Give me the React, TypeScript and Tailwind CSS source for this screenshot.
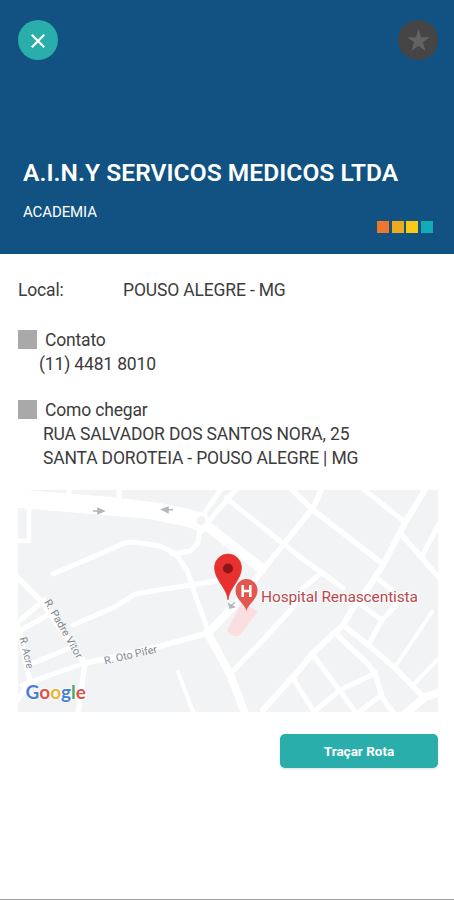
const ROADS: { d: string; w: number }[] = [
  { d: "M69 488V500M119 490V504", w: 5 },
  { d: "M29 508V541H16", w: 4.5 },
  { d: "M53 574L100 554L124 543L133 542L160 546L175 553L187 570L197 600L209 633", w: 5 },
  { d: "M172 554L190 551L198 543L200 526", w: 5 },
  { d: "M73 625L115 607L135 594L165 589L217 581", w: 5 },
  { d: "M203 515L222 488M210 520L237 488", w: 5 },
  { d: "M226 498L300 557L343 588", w: 5 },
  { d: "M262 571L300 524L313 508L322 488", w: 5.5 },
  { d: "M290 488L313 510L383 564", w: 5.5 },
  { d: "M362 488L405 522", w: 5 },
  { d: "M426 488L405 523L383 565L368 588L355 605L343 625L313 653L300 669L263 710", w: 6 },
  { d: "M402 535L440 579M440 522L422 556", w: 5 },
  { d: "M377 578L392 590L402 599L382 620L370 642M360 604L382 620", w: 5 },
  { d: "M343 625L372 648L397 670L423 697", w: 5.5 },
  { d: "M397 664L432 612M415 683L440 657", w: 4 },
  { d: "M440 692L425 697L405 714", w: 8 },
  { d: "M335 633L367 663L375 673L382 697L394 714", w: 5.5 },
  { d: "M374 674L340 690L315 711M313 655L337 687L356 713M293 678L314 712M379 697L359 712", w: 5 },
  { d: "M208 633L233 607", w: 8 },
  { d: "M233 607L262 571", w: 6 },
  { d: "M85 663L105 659L157 647L208 633", w: 5.5 },
  { d: "M231 673L263 640L293 607L303 588L320 574", w: 5 },
  { d: "M178 672L194 714", w: 4 },
  { d: "M16 576L42 602L63 632L85 663L78 714", w: 5.5 },
  { d: "M18 622L44 600M18 632L53 612M28 665L70 648M22 685L85 663", w: 5 },
  { d: "M18 625L30 682L16 702", w: 5 },
];

const GOOGLE = [
  { c: "G", fill: "#4680dc" },
  { c: "o", fill: "#df5147" },
  { c: "o", fill: "#edb52c" },
  { c: "g", fill: "#4680dc" },
  { c: "l", fill: "#47a866" },
  { c: "e", fill: "#df5147" },
];

function RouteMap() {
  return (
    <svg viewBox="18 490 420 222" className="block h-[222px] w-[420px] font-[Roboto,sans-serif]">
      <rect x="18" y="490" width="420" height="222" fill="#f1f3f4" />
      <g fill="none" stroke="#fff" strokeLinejoin="round" strokeLinecap="round">
        {ROADS.map((r) => (
          <path key={r.d} d={r.d} strokeWidth={r.w} />
        ))}
        <path d="M201 521L262 569" strokeWidth="10" />
        <path d="M207 632L230 674L246 716" strokeWidth="8" />
      </g>
      <path d="M18 490H25L110 497L160 503L193 510L207 514L212 527L203 533L187 527L150 519L80 513L18 508Z" fill="#fff" />
      <circle cx="201" cy="520.500" r="4.500" fill="#f1f3f4" />
      <path d="M242 603L258 611L240 635Q233 639 227 630Z" fill="#fbdfe0" />
      <g stroke="#b4b7ba" fill="#b4b7ba" strokeWidth="1.500">
        <path d="M93 511H100" />
        <path d="M98 508.500L104 511L98 513.500Z" />
        <path d="M166 509.800H173" />
        <path d="M168 507.300L162 509.500L168 512.500Z" />
        <path d="M235 602L231 606" />
        <path d="M229 604L230 608L234 607Z" />
      </g>
      <g fill="#84888c" fontSize="10.500">
        <text transform="translate(44 602) rotate(60)" textLength="66" lengthAdjust="spacingAndGlyphs">R. Padre Vitor</text>
        <text transform="translate(19.500 638) rotate(77)" textLength="32" lengthAdjust="spacingAndGlyphs">R. Acre</text>
        <text transform="translate(105 664.500) rotate(-13)" textLength="54" lengthAdjust="spacingAndGlyphs">R. Oto Pifer</text>
      </g>
      <path d="M228 600C227 588 214.500 580 214.500 567.500A13.500 13.500 0 0 1 241.500 567.500C241.500 580 229 588 228 600Z" fill="#e8302f" stroke="#d32b2b" strokeWidth="0.600" />
      <circle cx="228" cy="568.500" r="5" fill="#8b1517" />
      <path d="M246.500 611.500C245.500 604 235.500 600 235.500 590.500A11 11.500 0 0 1 257.500 590.500C257.500 600 247.500 604 246.500 611.500Z" fill="#e15750" />
      <path d="M242.700 585V597M250.300 585V597M242.700 591H250.300" fill="none" stroke="#fff" strokeWidth="2.500" />
      <text x="261" y="602" fontSize="15.500" fill="#b9474b" stroke="#fff" strokeWidth="2" paintOrder="stroke" textLength="157">
        Hospital Renascentista
      </text>
      <text x="25.500" y="699" fontSize="19" fontWeight="700" fontFamily="Lato, sans-serif" textLength="60.500" lengthAdjust="spacingAndGlyphs" stroke="#fff" strokeWidth="2" paintOrder="stroke">
        {GOOGLE.map((l, i) => (
          <tspan key={i} fill={l.fill}>{l.c}</tspan>
        ))}
      </text>
    </svg>
  );
}

export default function App() {
  return (
    <div className="flex h-[900px] w-[454px] flex-col overflow-hidden border-b border-[#a0a0a0] bg-white font-[Roboto,sans-serif] text-[#3c3c3c]">
      <header className="flex h-[254px] shrink-0 flex-col bg-[#115282] pt-5 text-white">
        <div className="flex justify-between pr-4 pl-[18px]">
          <button className="flex size-10 items-center justify-center rounded-full bg-[#29aeac]">
            <svg viewBox="0 0 14 14" className="mt-px size-[14px]" fill="none" stroke="#fff" strokeWidth="2.200">
              <path d="M0.800 0.800L13.200 13.200M13.200 0.800L0.800 13.200" />
            </svg>
          </button>
          <button className="flex size-10 items-center justify-center rounded-full bg-[#454545]">
            <svg viewBox="0 0 24 24" className="mt-px size-[23px]" fill="#636363">
              <path d="M12 0L14.700 8.600H24L16.500 13.900L19.400 23L12 17.400L4.600 23L7.500 13.900L0 8.600H9.300Z" />
            </svg>
          </button>
        </div>
        <h1 className="mt-[97px] ml-[23px] text-[24.500px] leading-8 font-semibold tracking-[0.06px] whitespace-nowrap">A.I.N.Y SERVICOS MEDICOS LTDA</h1>
        <p className="mt-[13px] ml-[23px] text-[15px] leading-5 tracking-[-0.1px]">ACADEMIA</p>
        <div className="-mt-px mr-[21px] flex justify-end gap-[2.670px]">
          <span className="size-3 bg-[#ef772b]" />
          <span className="size-3 bg-[#edaa1c]" />
          <span className="size-3 bg-[#f8ca16]" />
          <span className="size-3 bg-[#13abb5]" />
        </div>
      </header>

      <main className="flex flex-col pt-6 pr-4 pl-[18px] text-[17.500px] leading-6 tracking-[-0.16px]">
        <div className="flex">
          <span className="w-[105px]">Local:</span>
          <span>POUSO ALEGRE - MG</span>
        </div>
        <section className="mt-[26px]">
          <div className="flex items-center gap-2">
            <span className="mb-[2px] size-[19px] bg-[#a9a9a9]" />
            <span>Contato</span>
          </div>
          <p className="pl-[21px]">(11) 4481 8010</p>
        </section>
        <section className="mt-[22px]">
          <div className="flex items-center gap-2">
            <span className="mb-[2px] size-[19px] bg-[#a9a9a9]" />
            <span>Como chegar</span>
          </div>
          <p className="pl-[25px] whitespace-nowrap">RUA SALVADOR DOS SANTOS NORA, 25</p>
          <p className="pl-[25px] whitespace-nowrap">SANTA DOROTEIA - POUSO ALEGRE | MG</p>
        </section>
        <div className="mt-5 tracking-normal">
          <RouteMap />
        </div>
        <button className="mt-[22px] h-[34px] w-[158px] self-end rounded-[5px] bg-[#29aeac] text-[13.500px] font-bold tracking-normal text-white shadow-sm">
          Traçar Rota
        </button>
      </main>
    </div>
  );
}
